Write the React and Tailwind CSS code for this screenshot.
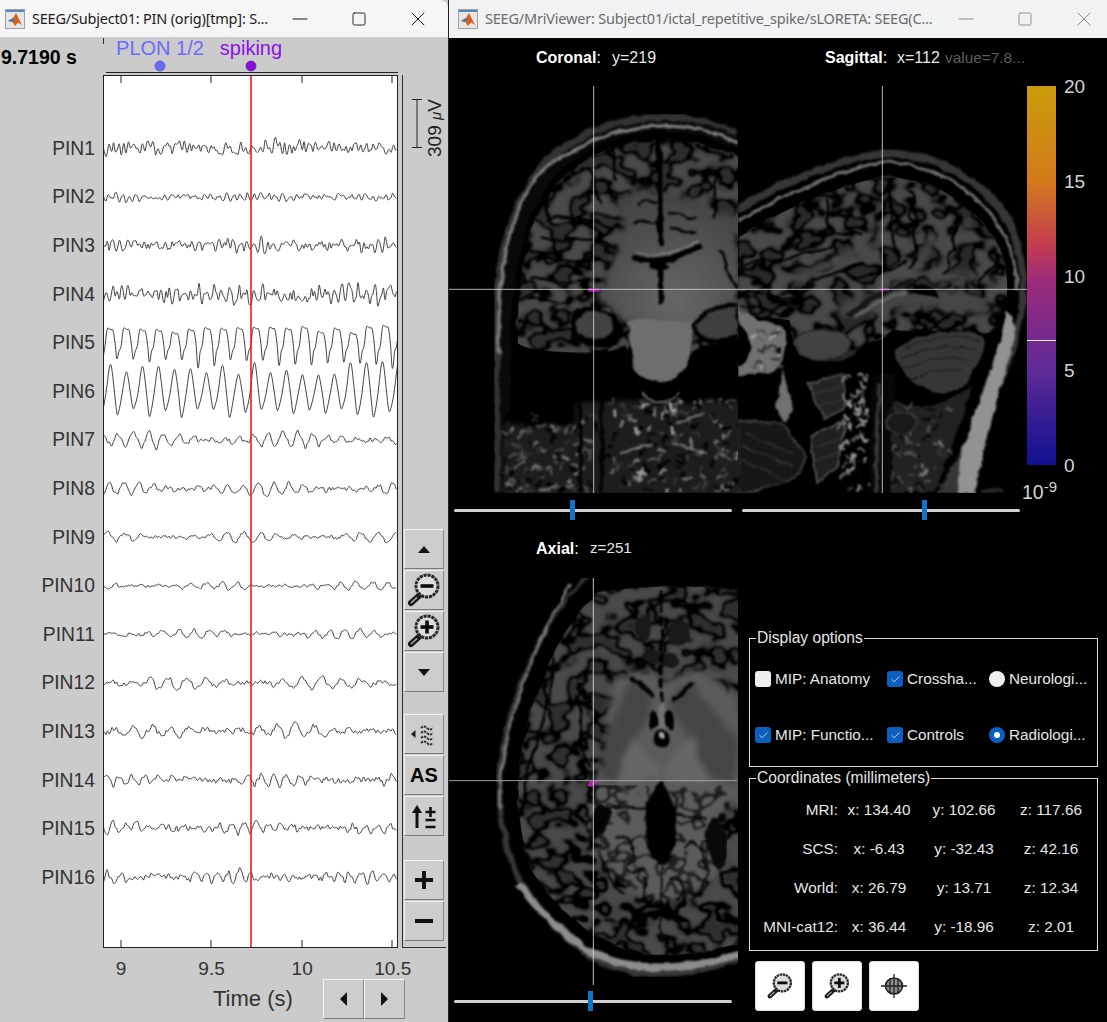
import React from "react";
import { Minus, Square, X, Check } from "lucide-react";

const channels = ["PIN1","PIN2","PIN3","PIN4","PIN5","PIN6","PIN7","PIN8","PIN9","PIN10","PIN11","PIN12","PIN13","PIN14","PIN15","PIN16"];
const baselines = [148,197,245,294,342,391,440,489,537,586,634,683,731,780,828,877];
// amplitude, wave period, noise share
const traceCfg = [[7.5,5,1],[4.5,7,0.8],[7,7,0.9],[10,8,0.9],[0,0,0],[0,0,0],[11,15,0.3],[8.5,15,0.35],[6.5,17,0.35],[5,15,0.45],[5.5,15,0.45],[8.5,19,0.35],[8,18,0.45],[8,13,0.5],[8,12,0.55],[8,11,0.6]];

function rng(seed) {
  let a = seed * 2654435761;
  return () => {
    a |= 0; a = (a + 0x6d2b79f5) | 0;
    let t = Math.imul(a ^ (a >>> 15), 1 | a);
    t = (t + Math.imul(t ^ (t >>> 7), 61 | t)) ^ t;
    return ((t ^ (t >>> 14)) >>> 0) / 4294967296;
  };
}

function smooth(pts) {
  let d = `M${pts[0][0].toFixed(1)} ${pts[0][1].toFixed(1)}`;
  for (let i = 1; i < pts.length - 1; i++) {
    const mx = (pts[i][0] + pts[i + 1][0]) / 2;
    const my = (pts[i][1] + pts[i + 1][1]) / 2;
    d += ` Q${pts[i][0].toFixed(1)} ${pts[i][1].toFixed(1)} ${mx.toFixed(1)} ${my.toFixed(1)}`;
  }
  return d;
}

function noiseTrace(i) {
  const [amp, period, noise] = traceCfg[i];
  const r = rng(i + 11);
  const base = baselines[i] - 75;
  const pts = [];
  let phase = r() * 6;
  for (let x = 0; x <= 295; x += 1.5) {
    phase += (1.5 / period) * Math.PI * 2 * (0.8 + r() * 0.4);
    const big = 0.6 + 0.5 * Math.sin(x / 23 + i);
    const v = -Math.sin(phase) * amp * 0.7 * big + (r() - 0.5) * 2 * amp * noise;
    pts.push([x, base + v]);
  }
  return smooth(pts);
}

function pin5() {
  const r = rng(55);
  const base = 342 - 75;
  const pts = [[0, base + 16]];
  for (let x = 0; x < 295; x += 16.2) {
    const top = -10 - r() * 8, low = 14 + r() * 11;
    pts.push([x + 2, base + 6], [x + 4, base + top], [x + 6, base + top + 1], [x + 8, base + top + 3], [x + 10, base + top + 1], [x + 12.5, base + 4], [x + 13.6, base + low + 4], [x + 15, base + low], [x + 16, base + 8]);
  }
  return smooth(pts);
}

function pin6() {
  const r = rng(66);
  const base = 391 - 75;
  const pts = [[0, base + 19]];
  for (let x = 0; x < 295; x += 16) {
    const top = -15 - r() * 14, low = 15 + r() * 10;
    pts.push([x + 3, base + 4], [x + 6, base + top + 3], [x + 7.5, base + top - 2], [x + 9, base + top + 4], [x + 12, base + 6], [x + 14, base + low + 3], [x + 15.5, base + low]);
  }
  return smooth(pts);
}

const traces = channels.map((c, i) => (i === 4 ? pin5() : i === 5 ? pin6() : noiseTrace(i)));

function MatlabIcon() {
  return (
    <svg width="20" height="20" viewBox="0 0 20 20" className="shrink-0">
      <rect x="0.5" y="0.5" width="19" height="19" fill="#e6e6e6" stroke="#a0a0a0" />
      <rect x="1" y="1" width="18" height="2" fill="#5a86c0" />
      <path d="M3 12 L8 9 L11 4 L17 16 L13 13.5 L10 17 L7 12.5 Z" fill="#d9601a" />
      <path d="M3 12 L8 9 L9.5 11 L7 13 Z" fill="#3a78b8" />
    </svg>
  );
}

function Magnifier({ plus, size = 36 }) {
  return (
    <svg width={size} height={size} viewBox="0 0 36 36">
      <path d="M15 22 L5 31" stroke="#1a1a1a" strokeWidth="6" strokeLinecap="round" />
      <path d="M5 31 L11 25.5" stroke="#b5b5b5" strokeWidth="1.4" />
      <circle cx="21" cy="14" r="11" fill="#dcdcdc" stroke="#2a2a2a" strokeWidth="3" strokeDasharray="3.2 0.8" />
      <path d="M14.5 14 H27.5" stroke="#0c0c0c" strokeWidth="3.6" />
      {plus && <path d="M21 7.5 V20.5" stroke="#0c0c0c" strokeWidth="3.6" />}
    </svg>
  );
}

function BevelButton({ children, className = "w-[40px]" }) {
  return (
    <div className={`h-[40px] flex items-center justify-center bg-[#cdcdcd] border border-t-[#f4f4f4] border-l-[#f4f4f4] border-r-[#8a8a8a] border-b-[#7a7a7a] text-black ${className}`}>
      {children}
    </div>
  );
}

function Tri({ dir }) {
  const d = { up: "M1 8 L7 1 L13 8 Z", down: "M1 1 L7 8 L13 1 Z", left: "M8 0 L8 14 L1 7 Z", right: "M1 0 L1 14 L8 7 Z" }[dir];
  const v = dir === "up" || dir === "down";
  return (
    <svg width={v ? 14 : 9} height={v ? 9 : 14} viewBox={v ? "0 0 14 9" : "0 0 9 14"}>
      <path d={d} fill="#111" />
    </svg>
  );
}

function TitleBar({ title, dim, h, textWidth, pad }) {
  const color = dim ? "text-[#6b6b6b]" : "text-[#1c1c1c]";
  const icon = dim ? "#8a8a8a" : "#1c1c1c";
  return (
    <div className={`flex items-center shrink-0 ${h} ${dim ? "bg-[#f0f2f4]" : "bg-[#f6f6f6] rounded-tr-[8px]"}`}>
      <div className={`${pad} mr-[7px]`}><MatlabIcon /></div>
      <div className={`font-['Noto_Sans',sans-serif] text-[14.5px] tracking-[-0.2px] whitespace-nowrap ${color} ${textWidth}`}>{title}</div>
      <div className="flex items-center gap-[39px]">
        <Minus size={24} strokeWidth={1} color={icon} />
        <Square size={16} strokeWidth={1.4} color={icon} />
        <X size={24} strokeWidth={1} color={icon} />
      </div>
    </div>
  );
}

function SignalWindow() {
  return (
    <div className="w-[448px] shrink-0 flex flex-col bg-[#cbcbcb] text-[#333] h-[1022px] overflow-hidden">
      <TitleBar title="SEEG/Subject01: PIN (orig)[tmp]: S..." h="h-[37px]" textWidth="w-[256px]" pad="ml-[5px]" />
      <div className="flex h-[911px]">
        <div className="w-[103px] shrink-0 flex flex-col">
          <div className="h-[20px] mt-[10px] pl-[1px] font-bold text-[19.5px] leading-[20px] text-black">9.7190 s</div>
          <div className="mt-[58px] flex flex-col">
            {channels.map((c) => (
              <div key={c} className="h-[48.6px] flex items-center justify-end pr-[8px] text-[19.3px]">{c}</div>
            ))}
          </div>
        </div>
        <div className="w-[295px] shrink-0 flex flex-col">
          <svg width="295" height="38" viewBox="103 37 295 38" className="block overflow-visible">
            <path d="M103.5 38 V44" stroke="#333" />
            <text x="160" y="55" textAnchor="middle" fontSize="20" fill="#6a6cff">PLON 1/2</text>
            <text x="251" y="55" textAnchor="middle" fontSize="20" fill="#8b12e6">spiking</text>
            <circle cx="160" cy="66" r="5" fill="#6a6cff" stroke="#3a3ab0" strokeWidth="0.6" />
            <circle cx="251" cy="66" r="5" fill="#8410e0" stroke="#50108a" strokeWidth="0.6" />
            <path d="M106 72.5 H398" stroke="#222" />
          </svg>
          <svg width="295" height="873" viewBox="0 0 295 873" className="block bg-white">
            {baselines.map((b) => (
              <path key={b} d={`M0 ${b - 75} H295`} stroke="#eaeaea" />
            ))}
            {traces.map((d, i) => (
              <path key={i} d={d} fill="none" stroke="#3b3b3b" strokeWidth="0.95" strokeLinejoin="round" />
            ))}
            {[18, 108, 199, 289].map((x) => (
              <g key={x}>
                <path d={`M${x} 0 V8`} stroke="#222" />
                <path d={`M${x} 865 V873`} stroke="#222" />
              </g>
            ))}
            <path d="M148 0 V873" stroke="#ee1c1c" strokeWidth="1.6" />
            <rect x="0.5" y="0.5" width="294" height="872" fill="none" stroke="#222" />
          </svg>
        </div>
        <div className="w-[50px] pt-[38px] pl-[4px]">
          <div className="w-[44px] h-[873px] border-l border-b border-[#333] pl-[1px]">
            <svg width="42" height="454" viewBox="0 0 42 454" className="block">
              <path d="M8 24.5 H18 M13 24.5 V72.5 M8 72.5 H18" stroke="#222" fill="none" />
              <text transform="translate(37 82) rotate(-90)" fontSize="19" fill="#222">309 <tspan fontStyle="italic" fontSize="15">μ</tspan>V</text>
            </svg>
            <div className="flex flex-col gap-[1px]">
              <BevelButton><Tri dir="up" /></BevelButton>
              <BevelButton><Magnifier /></BevelButton>
              <BevelButton><Magnifier plus /></BevelButton>
              <BevelButton><Tri dir="down" /></BevelButton>
              <div className="h-[20px]" />
              <BevelButton>
                <svg width="32" height="24" viewBox="0 0 32 24">
                  <path d="M3 12 L7.5 8 V16 Z" fill="#222" />
                  <path d="M13 6 q3 -3 6 0 t6 0 M13 11 q3 -3 6 0 t6 0 M13 16 q3 -3 6 0 t6 0 M13 21 q3 -3 6 0 t6 0" stroke="#333" strokeWidth="1.8" strokeDasharray="2.5 0.8" fill="none" />
                </svg>
              </BevelButton>
              <BevelButton><span className="font-bold text-[20px] leading-none text-black">AS</span></BevelButton>
              <BevelButton>
                <svg width="30" height="28" viewBox="0 0 30 28">
                  <path d="M8 26 V8" stroke="#111" strokeWidth="3" />
                  <path d="M3 11 L8 3 L13 11 Z" fill="#111" />
                  <path d="M16.5 10 H26.5 M21.5 5 V15 M16.5 18 H26.5 M16.5 25 H26.5" stroke="#111" strokeWidth="2.6" />
                </svg>
              </BevelButton>
              <div className="h-[22px]" />
              <BevelButton><span className="relative block w-[18px] h-[18px]"><span className="absolute left-0 top-[7px] w-[18px] h-[4px] bg-[#111]" /><span className="absolute left-[7px] top-0 w-[4px] h-[18px] bg-[#111]" /></span></BevelButton>
              <BevelButton><span className="block w-[18px] h-[4px] bg-[#111]" /></BevelButton>
            </div>
          </div>
        </div>
      </div>
      <div className="flex pl-[75.7px] mt-[11px] h-[20px] text-[19px] leading-[20px]">
        {["9", "9.5", "10", "10.5"].map((t) => (
          <div key={t} className="w-[90.6px] text-center">{t}</div>
        ))}
      </div>
      <div className="flex items-start">
        <div className="ml-[213px] w-[110px] text-[22px] leading-[40px]">Time (s)</div>
        <BevelButton className="w-[41px]"><Tri dir="left" /></BevelButton>
        <BevelButton className="w-[41px]"><Tri dir="right" /></BevelButton>
      </div>
    </div>
  );
}

const sharedDefs = (
  <defs>
    <filter id="soft" x="0" y="0" width="100%" height="100%" colorInterpolationFilters="sRGB">
      <feTurbulence type="fractalNoise" baseFrequency="0.022" numOctaves="3" seed="4" result="n" />
      <feDisplacementMap in="SourceGraphic" in2="n" scale="18" xChannelSelector="R" yChannelSelector="G" />
      <feGaussianBlur stdDeviation="3.2" />
    </filter>
    <filter id="core" x="-10%" y="-10%" width="120%" height="120%" colorInterpolationFilters="sRGB">
      <feTurbulence type="fractalNoise" baseFrequency="0.02" numOctaves="3" seed="7" result="n" />
      <feDisplacementMap in="SourceGraphic" in2="n" scale="36" xChannelSelector="R" yChannelSelector="G" />
      <feGaussianBlur stdDeviation="10" />
    </filter>
    {/* contour bands of the same noise read as sulci, its high parts as white matter */}
    <filter id="sulci" colorInterpolationFilters="sRGB">
      <feTurbulence type="fractalNoise" baseFrequency="0.017 0.021" numOctaves="2" seed="9" />
      <feColorMatrix values="0 0 0 0 0.03 0 0 0 0 0.03 0 0 0 0 0.03 1 0 0 0 0" />
      <feComponentTransfer>
        <feFuncA type="table" tableValues="0 0 0 0 0 0 0 0 0.95 0.8 0 0 0 0 0 0 0 0 0 0" />
      </feComponentTransfer>
      <feGaussianBlur stdDeviation="3" />
    </filter>
    <filter id="whitefold" colorInterpolationFilters="sRGB">
      <feTurbulence type="fractalNoise" baseFrequency="0.017 0.021" numOctaves="2" seed="9" />
      <feColorMatrix values="0 0 0 0 0.38 0 0 0 0 0.38 0 0 0 0 0.38 1 0 0 0 0" />
      <feComponentTransfer>
        <feFuncA type="table" tableValues="0 0 0 0 0 0 0 0 0 0 0.3 1 1 1 1 1 1 1 1 1" />
      </feComponentTransfer>
      <feGaussianBlur stdDeviation="6" />
    </filter>
    <radialGradient id="wm" cx="0.55" cy="0.8" r="0.7">
      <stop offset="0" stopColor="#808080" />
      <stop offset="1" stopColor="#5c5c5c" />
    </radialGradient>
  </defs>
);

function Folds({ clip, x, y, w, h }) {
  return (
    <g clipPath={`url(#${clip})`}>
      <rect x={x} y={y} width={w} height={h} fill="#000" filter="url(#whitefold)" />
      <rect x={x} y={y} width={w} height={h} fill="#000" filter="url(#sulci)" />
    </g>
  );
}

function Strokes({ items, color = "#0c0c0c", w = 10 }) {
  return items.map((d, i) => <path key={i} d={d} fill="none" stroke={color} strokeWidth={w} strokeLinecap="round" strokeLinejoin="round" />);
}

// speckled soft tissue around the neck
function speckle(seed, n, x0, x1, y0, y1, colors) {
  const r = rng(seed);
  const out = [];
  for (let i = 0; i < n; i++) {
    const x = x0 + r() * (x1 - x0);
    const y = y0 + r() * (y1 - y0);
    const dx = (r() - 0.5) * 50;
    const dy = (r() - 0.5) * 34;
    out.push(<path key={i} d={`M${x.toFixed(0)} ${y.toFixed(0)} q${(dx / 2).toFixed(0)} ${(-dy).toFixed(0)} ${dx.toFixed(0)} ${dy.toFixed(0)}`} fill="none" stroke={colors[Math.floor(r() * colors.length)]} strokeWidth={3 + r() * 6} strokeLinecap="round" />);
  }
  return out;
}

const coronalBrain = "M80 760 C80 600 100 420 165 320 C225 225 350 150 490 150 C590 150 670 175 720 200 V830 H600 L560 700 H420 L400 780 C300 790 160 790 100 770 Z";
const sagittalBrain = "M720 445 C830 370 990 290 1140 262 C1270 262 1370 320 1445 420 C1500 490 1510 570 1495 660 C1480 710 1450 740 1420 730 L1170 720 L1090 770 C1040 830 900 830 880 760 L870 690 L720 670 Z";
const axialBrain = "M85 640 C95 440 190 190 320 70 C440 45 620 45 760 60 V1115 C620 1160 470 1175 350 1115 C250 1060 170 980 125 900 C100 830 85 760 85 640 Z";
const mriTone = "block shrink-0 brightness-[.82] contrast-[1.12]";

function Coronal() {
  return (
    <svg width="289" height="407" viewBox="-119 -12 839 1221" preserveAspectRatio="none" className={mriTone}>
      {sharedDefs}
      <clipPath id="coronalClip"><path d={coronalBrain} /></clipPath>
      <g filter="url(#soft)">
        <path d="M12 1209 V620 C14 500 55 320 165 195 C250 125 370 72 500 72 C590 72 670 95 720 118 V1209 Z" fill="#484848" />
        <path d="M30 1209 V620 C32 500 70 335 180 212 C265 142 375 92 500 92 C590 92 670 112 720 135 V1209 Z" fill="#1a1a1a" />
        <path d="M26 790 C20 600 40 430 110 300 C135 255 180 205 225 195 C300 145 390 108 500 108 C590 108 660 128 720 156" fill="none" stroke="#969696" strokeWidth="10" />
        <path d="M62 820 C62 620 85 430 150 320 C210 210 350 128 490 128 C590 128 670 155 720 182 V1209 H62 Z" fill="#050505" />
        <path d={coronalBrain} fill="#424242" />
      </g>
      <Folds clip="coronalClip" x={60} y={130} w={680} h={720} />
      <g filter="url(#core)">
        <path d="M370 340 C400 300 430 300 450 290 C470 300 480 320 490 340 C520 300 550 300 600 340 C640 350 680 370 720 390 V640 C680 640 620 680 590 720 L400 700 C360 660 320 650 310 620 C345 560 370 500 385 430 Z" fill="url(#wm)" />
      </g>
      <g filter="url(#soft)">
        <Strokes w={7} items={["M170 385 C220 375 300 385 350 415", "M150 445 C210 465 280 430 350 465", "M135 510 C190 490 230 535 320 505", "M120 565 C170 550 210 600 290 565", "M110 625 C160 610 180 650 230 635", "M355 175 C370 215 350 260 365 270", "M285 235 C310 280 300 310 325 340", "M430 345 C450 320 470 350 480 340", "M420 400 C450 380 470 410 485 395", "M520 370 C550 360 570 395 595 380", "M525 415 C560 410 570 440 595 430", "M655 240 C650 300 655 340 650 380", "M670 480 C690 500 680 560 715 590"]} />
        <path d="M490 135 C495 260 490 380 498 470" fill="none" stroke="#0b0b0b" strokeWidth="15" />
        <path d="M415 497 C460 530 550 505 612 462" fill="none" stroke="#0b0b0b" strokeWidth="17" />
        <path d="M425 485 C470 505 540 495 605 450" fill="none" stroke="#b0b0b0" strokeWidth="3" />
        <path d="M495 530 V640" fill="none" stroke="#0a0a0a" strokeWidth="16" />
        <ellipse cx="490" cy="528" rx="30" ry="14" fill="#0b0b0b" />
        <path d="M235 690 C240 640 300 650 350 670 C410 700 400 760 350 770 C290 780 225 760 235 690 Z" fill="#0f0f0f" />
        <ellipse cx="305" cy="705" rx="55" ry="40" fill="#585858" />
        <path d="M590 710 C620 660 680 640 720 650 V740 C680 750 620 770 590 710 Z" fill="#555" stroke="#101010" strokeWidth="12" />
        <path d="M62 790 C160 800 300 800 395 770 C410 830 440 880 490 895 C540 880 570 830 590 780 L720 740 V910 H62 Z" fill="#060606" />
        <path d="M410 780 C405 840 450 878 490 878 C530 878 580 840 585 770 L590 690 H400 Z" fill="#888" />
      </g>
      <g filter="url(#core)">
        <path d="M40 1000 H300 V1240 H40 Z" fill="#303030" />
        <path d="M240 930 H760 V1240 H240 Z" fill="#303030" />
      </g>
      <g filter="url(#soft)">
        <path d="M300 880 C360 880 400 850 490 930 C580 850 640 880 720 870" fill="none" stroke="#070707" strokeWidth="26" />
        {speckle(3, 170, 340, 720, 930, 1205, ["#999", "#707070", "#0e0e0e", "#505050", "#0e0e0e", "#bcbcbc", "#3a3a3a"])}
        {speckle(4, 120, 45, 300, 970, 1205, ["#949494", "#666", "#0e0e0e", "#484848"])}
        <path d="M262 900 V1209 M325 900 V1209" stroke="#101010" strokeWidth="10" />
        <path d="M445 905 C460 950 530 950 550 905" fill="none" stroke="#888" strokeWidth="6" />
        <path d="M380 1090 L470 1060 M630 1090 L530 1060 M540 1000 L620 970" stroke="#a0a0a0" strokeWidth="6" />
      </g>
      <path d="M285 600 H318" stroke="#e030e0" strokeWidth="10" opacity="0.9" />
      <path d="M301 -12 V1209" stroke="#f4f4f4" strokeWidth="2.6" />
      <path d="M-119 598 H720" stroke="#eee" strokeWidth="2.6" />
    </svg>
  );
}

function Sagittal() {
  return (
    <svg width="289" height="407" viewBox="720 -12 839 1221" preserveAspectRatio="none" className={mriTone}>
      <clipPath id="sagittalClip"><path d={sagittalBrain} /></clipPath>
      <g filter="url(#soft)">
        <path d="M720 345 C820 280 980 205 1140 178 C1280 175 1420 250 1500 360 C1550 440 1560 540 1556 640 C1540 760 1490 880 1440 1010 C1410 1090 1380 1150 1370 1209 H720 Z" fill="#4c4c4c" />
        <path d="M720 372 C830 300 990 225 1140 200 C1270 198 1400 265 1480 375 C1530 450 1542 540 1538 640 C1520 760 1475 860 1420 980 L1300 1209 H720 Z" fill="#0f0f0f" />
        <path d="M720 395 C830 325 990 245 1140 215 C1270 215 1390 285 1470 390 C1515 460 1530 530 1528 600" fill="none" stroke="#8c8c8c" strokeWidth="9" />
        <path d="M720 420 C830 345 990 268 1140 235 C1270 235 1380 295 1455 400 C1510 470 1520 560 1512 650 C1490 760 1440 860 1340 920 L1100 850 L860 800 L720 660 Z" fill="#050505" />
        <path d={sagittalBrain} fill="#3e3e3e" />
      </g>
      <Folds clip="sagittalClip" x={720} y={250} w={800} h={500} />
      <g filter="url(#core)">
        <Strokes w={56} color="#5c5c5c" items={["M1040 660 C1150 625 1280 605 1420 650"]} />
        <Strokes w={26} color="#606060" items={["M1170 610 C1230 540 1270 500 1290 440", "M1290 570 C1360 545 1430 560 1480 590", "M1290 550 C1340 480 1370 440 1385 400", "M880 570 C960 530 1040 500 1120 460"]} />
      </g>
      <g filter="url(#soft)">
        <Strokes w={7} items={["M740 530 C790 490 830 530 880 500 C920 470 960 500 1000 460", "M980 330 C1000 370 960 400 1000 430 C1040 440 1040 410 1080 430", "M1160 290 C1150 340 1190 360 1160 410 C1190 430 1150 480 1195 500", "M1220 300 C1260 320 1180 370 1240 400 C1200 440 1270 470 1220 530", "M1360 370 C1380 400 1320 440 1350 480 C1310 490 1350 530 1320 550", "M1470 500 C1480 540 1400 570 1420 590", "M730 610 C790 590 840 640 880 620", "M730 650 C790 640 830 680 870 670", "M900 600 C960 550 1020 550 1080 520", "M1060 565 C1100 565 1140 545 1210 515"]} />
        <path d="M1040 680 C1100 620 1160 600 1230 570" fill="none" stroke="#2a2a2a" strokeWidth="18" />
        <path d="M1060 680 C1100 650 1170 610 1210 610" fill="none" stroke="#7c7c7c" strokeWidth="10" />
        <path d="M1215 610 C1230 575 1280 570 1300 625 Z" fill="#060606" />
        <path d="M880 760 C900 700 1030 710 1050 760 C1020 830 910 830 880 760 Z" fill="#585858" stroke="#2a2a2a" strokeWidth="3" />
        <path d="M1060 790 C1100 740 1170 740 1190 800 C1170 860 1090 840 1060 790 Z" fill="#060606" />
        <path d="M1170 780 C1240 720 1350 710 1440 730 C1440 830 1380 910 1320 915 C1250 900 1190 880 1170 780 Z" fill="#4c4c4c" stroke="#0a0a0a" strokeWidth="7" />
        <Strokes w={3} color="#2b2b2b" items={["M1200 780 C1260 740 1340 730 1420 750", "M1195 810 C1260 770 1340 760 1410 780", "M1205 840 C1260 800 1340 800 1395 810", "M1225 870 C1270 840 1330 840 1370 840"]} />
        <path d="M720 660 C760 690 850 700 860 730 C860 800 840 850 790 850 L720 860 Z" fill="#8c8c8c" />
        <path d="M720 700 C760 730 770 790 730 830 L720 830 Z" fill="#050505" />
        <circle cx="835" cy="780" r="9" fill="#151515" />
        {speckle(9, 24, 770, 850, 720, 840, ["#c8c8c8", "#444", "#777"])}
        <path d="M720 860 L830 850 C835 900 835 950 790 975 L720 950 Z" fill="#040404" />
        <path d="M850 840 L880 960 L860 1000 L830 950 Z" fill="#8c8c8c" />
        <path d="M720 990 L850 1000 L920 1100 C900 1170 850 1190 720 1209 Z" fill="#2a2a2a" stroke="#6a6a6a" strokeWidth="4" />
        <path d="M920 880 L1030 850 L1030 960 L970 985 Z" fill="#383838" stroke="#808080" strokeWidth="4" />
        <path d="M930 1040 L1030 990 L1010 1130 L950 1180 Z" fill="#343434" stroke="#8c8c8c" strokeWidth="4" />
        <Strokes w={3} color="#555" items={["M740 1030 L880 1090", "M730 1070 L880 1130", "M730 1110 L860 1170", "M950 1070 L1010 1050", "M950 1110 L1010 1090", "M940 910 L1020 890", "M950 950 L1020 930"]} />
        {speckle(7, 60, 1030, 1100, 850, 1205, ["#b0b0b0", "#808080", "#222", "#c8c8c8"])}
        <path d="M1110 850 L1100 1209 H1160 L1180 850 Z" fill="#181818" />
        <path d="M1130 880 L1120 1209" stroke="#4e4e4e" strokeWidth="10" />
        <path d="M1170 930 C1250 960 1320 960 1400 880 C1370 1000 1330 1100 1290 1209 H1165 Z" fill="#363636" />
        {speckle(8, 60, 1165, 1330, 950, 1205, ["#6a6a6a", "#1a1a1a", "#909090", "#444"])}
        <ellipse cx="1195" cy="1000" rx="45" ry="30" fill="#2c2c2c" stroke="#666" strokeWidth="3" />
        <path d="M1500 660 C1480 780 1430 900 1365 1100 L1355 1209 H1410 C1420 1120 1480 900 1530 720 Z" fill="#b0b0b0" />
        <path d="M1420 1209 C1440 1190 1480 1190 1495 1209 Z" fill="#3c3c3c" />
      </g>
      <path d="M1132 598 H1158" stroke="#e030e0" strokeWidth="8" opacity="0.8" />
      <path d="M1139 -12 V1209" stroke="#f4f4f4" strokeWidth="2.6" />
      <path d="M720 598 H1559" stroke="#eee" strokeWidth="2.6" />
    </svg>
  );
}

function Axial() {
  return (
    <svg width="289" height="407" viewBox="-123 24 867 1221" preserveAspectRatio="none" className={mriTone}>
      <clipPath id="axialClip"><path d={axialBrain} /></clipPath>
      <g filter="url(#soft)">
        <path d="M300 10 C160 120 30 400 20 650 C20 800 60 900 90 950 C150 1040 240 1140 340 1190 C470 1240 620 1225 760 1170 V10 Z" fill="#4c4c4c" />
        <path d="M310 10 C170 130 45 400 36 650 C36 790 75 890 105 940 C170 1030 250 1120 350 1170 C470 1215 620 1200 760 1150 V10 Z" fill="#121212" />
        <path d="M85 940 C150 1030 230 1100 310 1150 C450 1215 620 1195 760 1150" fill="none" stroke="#aaa" strokeWidth="22" />
        <path d="M28 720 C25 550 90 300 240 40" fill="none" stroke="#969696" strokeWidth="8" />
        <path d="M62 640 C70 430 170 170 320 50 C440 20 620 20 760 40 V1130 C620 1180 470 1195 340 1135 C240 1080 160 1000 110 920 C80 850 62 760 62 640 Z" fill="#060606" />
        <path d={axialBrain} fill="#444" />
      </g>
      <Folds clip="axialClip" x={80} y={60} w={680} h={1100} />
      <g filter="url(#core)">
        <path d="M370 330 C420 290 470 300 515 340 C560 300 620 290 680 330 C720 360 741 400 760 420 V700 C680 700 660 760 700 900 C660 940 620 960 600 980 C540 1000 470 990 420 960 C360 900 320 860 300 780 C290 700 310 640 330 600 C345 530 350 430 370 330 Z" fill="#747474" />
        <path d="M425 320 L500 390 L375 640 L330 620 C340 520 380 400 425 320 Z" fill="#5c5c5c" />
        <path d="M610 335 L530 390 L670 640 L741 640 V520 Z" fill="#5c5c5c" />
        <path d="M380 640 L420 500 C460 530 480 560 515 620 Z" fill="#808080" />
        <path d="M650 640 L610 500 C570 530 550 560 515 620 Z" fill="#808080" />
      </g>
      <g clipPath="url(#axialClip)">
        <rect x="300" y="680" width="460" height="340" fill="#000" filter="url(#sulci)" opacity="0.7" />
      </g>
      <g filter="url(#soft)">
        <Strokes w={8} items={["M205 160 C175 250 205 300 170 400 C160 500 110 560 100 680", "M270 400 C275 480 265 540 300 590", "M265 345 C300 370 270 400 300 380"]} />
        <ellipse cx="460" cy="175" rx="28" ry="40" fill="#2c2c2c" />
        <ellipse cx="565" cy="190" rx="32" ry="40" fill="#2c2c2c" />
        <ellipse cx="490" cy="260" rx="34" ry="24" fill="#2c2c2c" />
        <ellipse cx="540" cy="270" rx="30" ry="22" fill="#2c2c2c" />
        <path d="M515 60 V520" stroke="#0a0a0a" strokeWidth="10" strokeDasharray="28 10" />
        <path d="M420 320 L490 380 M610 335 L545 395" stroke="#141414" strokeWidth="12" />
        <path d="M485 480 C480 430 495 410 500 470 M545 480 C550 430 535 400 530 470" stroke="#0c0c0c" strokeWidth="16" fill="none" />
        <path d="M505 400 H525 V490 H505 Z" fill="#8c8c8c" />
        <ellipse cx="515" cy="505" rx="24" ry="24" fill="#0f0f0f" />
        <circle cx="515" cy="495" r="8" fill="#d8d8d8" />
        <path d="M515 630 C470 680 470 700 465 780 C470 840 490 880 515 885 C540 880 560 820 560 770 C570 720 540 680 515 630 Z" fill="#111" />
        <path d="M330 700 C300 720 295 770 315 810 C350 780 370 740 365 715 Z" fill="#151515" />
        <path d="M665 745 C700 730 730 810 690 905 C650 860 630 790 665 745 Z" fill="#1a1a1a" />
        <Strokes w={6} color="#131313" items={["M325 840 C350 900 370 950 400 970", "M375 800 C420 790 440 840 430 870 C400 880 400 920 460 900", "M360 710 C400 710 440 720 470 715", "M560 730 C600 750 630 730 650 745", "M580 830 C620 800 640 840 650 900 C660 930 620 980 600 990", "M515 890 V1120", "M460 920 C480 960 440 980 480 1010", "M540 930 C590 920 590 970 560 990"]} />
      </g>
      <path d="M292 648 L300 632 H328 L320 640 L305 650 Z" fill="#d040d0" opacity="0.9" />
      <path d="M310 24 V1245" stroke="#f4f4f4" strokeWidth="2.8" />
      <path d="M-123 632 H741" stroke="#c0c0c0" strokeWidth="3" />
    </svg>
  );
}

function Slider({ thumb, w = 278 }) {
  return (
    <div className="relative h-[20px] flex items-center" style={{ width: w }}>
      <div className="w-full h-[3px] bg-[#cfcfcf] rounded-full" />
      <div className="absolute top-0 w-[5px] h-[20px] bg-[#0f75c9]" style={{ left: thumb }} />
    </div>
  );
}

function CheckOption({ kind, on, label }) {
  return (
    <div className="flex items-center gap-[4px] whitespace-nowrap">
      {kind === "check" ? (
        <span className={`w-[16px] h-[16px] rounded-[3px] flex items-center justify-center ${on ? "bg-[#0a60bf]" : "bg-[#efefef]"}`}>
          {on && <Check size={11} strokeWidth={1.6} color="#fff" />}
        </span>
      ) : (
        <span className={`w-[16px] h-[16px] rounded-full flex items-center justify-center ${on ? "bg-[#0a60bf]" : "bg-[#efefef]"}`}>
          {on && <span className="block w-[6px] h-[6px] rounded-full bg-white" />}
        </span>
      )}
      <span>{label}</span>
    </div>
  );
}

const coords = [
  ["MRI:", "x: 134.40", "y: 102.66", "z: 117.66"],
  ["SCS:", "x: -6.43", "y: -32.43", "z: 42.16"],
  ["World:", "x: 26.79", "y: 13.71", "z: 12.34"],
  ["MNI-cat12:", "x: 36.44", "y: -18.96", "z: 2.01"],
];

function IconTile({ children }) {
  return <div className="w-[50px] h-[50px] bg-white border border-[#dcdcdc] rounded-[3px] flex items-center justify-center">{children}</div>;
}

function MriWindow() {
  return (
    <div className="flex-1 min-w-0 ml-[1px] flex flex-col bg-black h-[1022px] overflow-hidden text-[#e6e6e6] text-[15.3px]">
      <TitleBar dim title="SEEG/MriViewer: Subject01/ictal_repetitive_spike/sLORETA: SEEG(C..." h="h-[38px]" textWidth="w-[469px]" pad="ml-[9px]" />
      <div className="flex items-center h-[39px] text-[16px]">
        <div className="ml-[87px] w-[76px] font-bold text-white">Coronal<span className="font-normal">:</span></div>
        <div className="w-[213px]">y=219</div>
        <div className="w-[72px] font-bold text-white">Sagittal<span className="font-normal">:</span></div>
        <div className="w-[48px]">x=112</div>
        <div className="text-[#5e5e5e] text-[15.4px]">value=7.8...</div>
      </div>
      <div className="h-[9px]" />
      <div className="flex">
        <Coronal />
        <Sagittal />
        <div className="flex">
          <div className="relative w-[29px] h-[379px] bg-[linear-gradient(to_bottom,#c99c0b,#d47a1c_25%,#c43c50_42%,#9a2a7c_52%,#5f2a98_75%,#101090)]">
            <div className="absolute left-0 right-0 top-[254px] h-[1px] bg-[#e8e8e8]" />
          </div>
          <div className="ml-[8px] -mt-[9px] h-[399px] flex flex-col justify-between text-[19px] leading-[20px] text-[#d4d4d4]">
            <span>20</span><span>15</span><span>10</span><span>5</span><span>0</span>
          </div>
        </div>
      </div>
      <div className="relative flex h-[32px] items-start pt-[7px] pl-[5px] gap-[10px]">
        <Slider thumb={116} />
        <Slider thumb={180} />
        <div className="absolute left-[573px] -top-[11px] text-[19.5px] text-[#d4d4d4] leading-[20px]">10<sup className="text-[15px]">-9</sup></div>
      </div>
      <div className="flex flex-1">
        <div className="w-[289px] shrink-0 flex flex-col">
          <div className="h-[53px] flex items-start pt-[12px] text-[16px]">
            <div className="ml-[87px] w-[54px] font-bold text-white">Axial<span className="font-normal">:</span></div>
            <div className="text-[15.2px]">z=251</div>
          </div>
          <Axial />
          <div className="pl-[5px] pt-[6px]"><Slider thumb={134} /></div>
        </div>
        <div className="ml-[11px] w-[349px] pt-[104px] flex flex-col">
          <fieldset className="h-[138px] border border-[#dedede] pl-[5px]">
            <legend className="ml-[1px] px-[1px] text-[15.6px] leading-[18px]">Display options</legend>
            <div className="grid grid-cols-[132px_102px_1fr] grid-rows-[56px_56px] items-center mt-[4px]">
              <CheckOption kind="check" label="MIP: Anatomy" />
              <CheckOption kind="check" on label="Crossha..." />
              <CheckOption kind="radio" label="Neurologi..." />
              <CheckOption kind="check" on label="MIP: Functio..." />
              <CheckOption kind="check" on label="Controls" />
              <CheckOption kind="radio" on label="Radiologi..." />
            </div>
          </fieldset>
          <fieldset className="mt-[2px] h-[182px] border border-[#dedede]">
            <legend className="ml-[6px] px-[1px] text-[15.6px] leading-[18px]">Coordinates (millimeters)</legend>
            <div className="grid grid-cols-[88px_82px_88px_86px] auto-rows-[39px] items-center mt-[4px]">
              {coords.map((row) => row.map((t, i) => (
                <div key={t} className={i === 0 ? "text-right" : "text-center"}>{t}</div>
              )))}
            </div>
          </fieldset>
          <div className="flex gap-[7px] mt-[10px] ml-[6px]">
            <IconTile><Magnifier size={28} /></IconTile>
            <IconTile><Magnifier plus size={28} /></IconTile>
            <IconTile>
              <svg width="30" height="30" viewBox="0 0 30 30">
                <ellipse cx="15" cy="15" rx="8.5" ry="8" fill="#8c8c8c" stroke="#222" strokeWidth="1.6" />
                <path d="M2 15 H28 M15 3 V27 M11 7 V23 M19 7 V23" stroke="#222" strokeWidth="1.3" />
              </svg>
            </IconTile>
          </div>
        </div>
      </div>
    </div>
  );
}

export default function App() {
  return (
    <div className="flex w-[1107px] h-[1022px] overflow-hidden bg-[#20242a] font-['Liberation_Sans',Arial,sans-serif]">
      <SignalWindow />
      <MriWindow />
    </div>
  );
}
